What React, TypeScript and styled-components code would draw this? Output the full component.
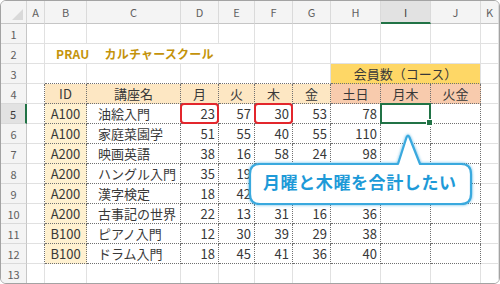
import React from "react";
import styled, { createGlobalStyle, css } from "styled-components";

const GlobalStyle = createGlobalStyle`
  html, body {
    margin: 0;
    padding: 0;
    background: #ffffff;
  }
  body {
    font-family: "Noto Sans CJK JP", "Noto Sans", sans-serif;
  }
`;

const COLS = ["A", "B", "C", "D", "E", "F", "G", "H", "I", "J", "K"];
const WIDTHS = [18, 42, 94, 38, 36, 38, 38, 50, 50, 50, 18];

type Line = "grid" | "dot" | "none";
type Align = "left" | "center" | "right";

type CellDef = {
  text?: string;
  bg?: string;
  align?: Align;
  span?: number;
  ring?: boolean;
  sel?: boolean;
  title?: boolean;
};

// values hidden behind the callout are left empty
const DATA: [string, string, ...(number | null)[]][] = [
  ["A100", "油絵入門", 23, 57, 30, 53, 78],
  ["A100", "家庭菜園学", 51, 55, 40, 55, 110],
  ["A200", "映画英語", 38, 16, 58, 24, 98],
  ["A200", "ハングル入門", 35, 19, null, null, null],
  ["A200", "漢字検定", 18, 42, null, null, null],
  ["A200", "古事記の世界", 22, 13, 31, 16, 36],
  ["B100", "ピアノ入門", 12, 30, 39, 29, 38],
  ["B100", "ドラム入門", 18, 45, 41, 36, 40],
];

const HEAD_BG = "#fde7c3";
const SUM_BG = "#f8cbad";
const ID_BG = "#fff1d0";

const buildRow = (r: number): CellDef[] => {
  const row: CellDef[] = COLS.map(() => ({}));
  if (r === 2) {
    row[1] = { text: "PRAU　 カルチャースクール", span: 4, title: true };
  }
  if (r === 3) {
    row[7] = { text: "会員数（コース）", bg: "#fed766", align: "center", span: 3 };
  }
  if (r === 4) {
    ["ID", "講座名", "月", "火", "木", "金"].forEach((t, i) => {
      row[i + 1] = { text: t, bg: HEAD_BG, align: "center" };
    });
    ["土日", "月木", "火金"].forEach((t, i) => {
      row[i + 7] = { text: t, bg: SUM_BG, align: "center" };
    });
  }
  if (r >= 5 && r <= 12) {
    const d = DATA[r - 5];
    row[1] = { text: d[0] as string, bg: ID_BG, align: "center" };
    row[2] = { text: d[1] as string, align: "left" };
    for (let i = 2; i < 7; i++) {
      const v = d[i];
      row[i + 1] = { text: v == null ? "" : String(v), align: "right" };
    }
  }
  if (r === 5) {
    row[3].ring = true;
    row[5].ring = true;
    row[8] = { sel: true };
  }
  return row;
};

const inTable = (r: number, c: number) => r >= 4 && r <= 12 && c >= 1 && c <= 9;

const App = () => {
  const rows = Array.from({ length: 13 }, (_, i) => i + 1);

  return (
    <>
      <GlobalStyle />
      <Frame>
        <Sheet>
          <Corner />
          {COLS.map((c, i) => (
            <ColHead key={c} $active={i === 8}>
              {c}
            </ColHead>
          ))}

          {rows.map((r) => {
            const defs = buildRow(r);
            const out: React.ReactNode[] = [
              <RowHead key={`h${r}`} $active={r === 5}>
                {r}
              </RowHead>,
            ];
            let c = 0;
            while (c < COLS.length) {
              const d = defs[c];
              const span = d.span ?? 1;
              const last = c + span - 1;
              const right: Line =
                d.title && r === 2
                  ? "grid"
                  : inTable(r, last) || (r >= 4 && r <= 12 && last === 0)
                  ? "dot"
                  : "grid";
              const bottom: Line =
                inTable(r, c) || (r === 3 && c >= 1 && c <= 9) ? "dot" : "grid";
              out.push(
                <Cell
                  key={`${r}-${c}`}
                  $span={span}
                  $bg={d.bg}
                  $align={d.align ?? "left"}
                  $right={right}
                  $bottom={bottom}
                  $ring={d.ring}
                  $sel={d.sel}
                >
                  {d.title ? <Title>{d.text}</Title> : d.text}
                </Cell>
              );
              c += span;
            }
            return out;
          })}

          <Callout>
            <svg width="232" height="80" viewBox="0 0 232 80">
              <path
                d="M14 33 H152 L160.5 6.5 Q162 2.5 163.5 6.5 L174 33 H215 Q225 33 225 43 V63 Q225 73 215 73 H14 Q4 73 4 63 V43 Q4 33 14 33 Z"
                fill="#ffffff"
                stroke="#3aa9de"
                strokeWidth="2.2"
                strokeLinejoin="round"
              />
            </svg>
            <CalloutText>月曜と木曜を合計したい</CalloutText>
          </Callout>
        </Sheet>
      </Frame>
    </>
  );
};

export default App;

const Frame = styled.div`
  width: 500px;
  height: 284px;
  box-sizing: border-box;
  border: 1px solid #a3a3a3;
  border-radius: 6px;
  overflow: hidden;
  background: #ffffff;
`;

const Sheet = styled.div`
  position: relative;
  display: grid;
  grid-template-columns: 26px ${WIDTHS.map((w) => `${w}px`).join(" ")};
  grid-template-rows: 23px repeat(13, 20px);
  color: #333333;
  font-size: 13px;
`;

const Corner = styled.div`
  position: relative;
  background: #f4f4f4;
  box-sizing: border-box;
  border-right: 1px solid #d6d6d6;
  border-bottom: 1px solid #c6c6c6;

  &::after {
    content: "";
    position: absolute;
    right: 3px;
    bottom: 3px;
    border-style: solid;
    border-width: 0 0 11px 11px;
    border-color: transparent transparent #d9d9d9 transparent;
  }
`;

const ColHead = styled.div<{ $active?: boolean }>`
  display: flex;
  align-items: center;
  justify-content: center;
  box-sizing: border-box;
  background: ${(p) => (p.$active ? "#e2e2e2" : "#f4f4f4")};
  border-right: 1px solid #dadada;
  border-bottom: ${(p) => (p.$active ? "2px solid #217346" : "1px solid #c6c6c6")};
  font-size: 11px;
  color: ${(p) => (p.$active ? "#3b3b3b" : "#606060")};
`;

const RowHead = styled.div<{ $active?: boolean }>`
  display: flex;
  align-items: center;
  justify-content: center;
  box-sizing: border-box;
  background: ${(p) => (p.$active ? "#e2e2e2" : "#f4f4f4")};
  border-right: ${(p) => (p.$active ? "2px solid #217346" : "1px solid #c6c6c6")};
  border-bottom: 1px solid #dadada;
  font-size: 11px;
  color: ${(p) => (p.$active ? "#3b3b3b" : "#606060")};
`;

const lineCss = (l: Line) =>
  l === "dot" ? "1px dotted #707070" : l === "grid" ? "1px solid #e1e1e1" : "none";

const Cell = styled.div<{
  $span: number;
  $bg?: string;
  $align: Align;
  $right: Line;
  $bottom: Line;
  $ring?: boolean;
  $sel?: boolean;
}>`
  position: relative;
  grid-column: span ${(p) => p.$span};
  display: flex;
  align-items: center;
  justify-content: ${(p) =>
    p.$align === "center" ? "center" : p.$align === "right" ? "flex-end" : "flex-start"};
  padding: ${(p) => (p.$align === "left" ? "0 0 0 11px" : p.$align === "right" ? "0 3px 0 0" : "0")};
  box-sizing: border-box;
  background: ${(p) => p.$bg ?? "#ffffff"};
  border-right: ${(p) => lineCss(p.$right)};
  border-bottom: ${(p) => lineCss(p.$bottom)};
  white-space: pre;
  color: #383838;

  ${(p) =>
    p.$ring &&
    css`
      &::after {
        content: "";
        position: absolute;
        inset: -1px -1px -1px -1px;
        border: 2px solid #e3262c;
        border-radius: 4px;
      }
    `}

  ${(p) =>
    p.$sel &&
    css`
      &::after {
        content: "";
        position: absolute;
        inset: -1px -1px -1px -1px;
        border: 2px solid #217346;
      }
      &::before {
        content: "";
        position: absolute;
        right: -3px;
        bottom: -3px;
        width: 5px;
        height: 5px;
        background: #217346;
        border: 1px solid #ffffff;
        z-index: 2;
      }
    `}
`;

const Title = styled.span`
  font-size: 12px;
  font-weight: 700;
  color: #c4930a;
  letter-spacing: 0.2px;
`;

const Callout = styled.div`
  position: absolute;
  left: 245px;
  top: 130px;
  width: 232px;
  height: 80px;
  z-index: 5;

  svg {
    position: absolute;
    inset: 0;
    filter: drop-shadow(0 0 1.5px rgba(40, 160, 220, 0.75));
  }
`;

const CalloutText = styled.span`
  position: absolute;
  left: 17px;
  top: 40px;
  font-size: 17px;
  line-height: 22px;
  font-weight: 700;
  letter-spacing: 0.6px;
  color: #1e9ad8;
  white-space: nowrap;
`;
